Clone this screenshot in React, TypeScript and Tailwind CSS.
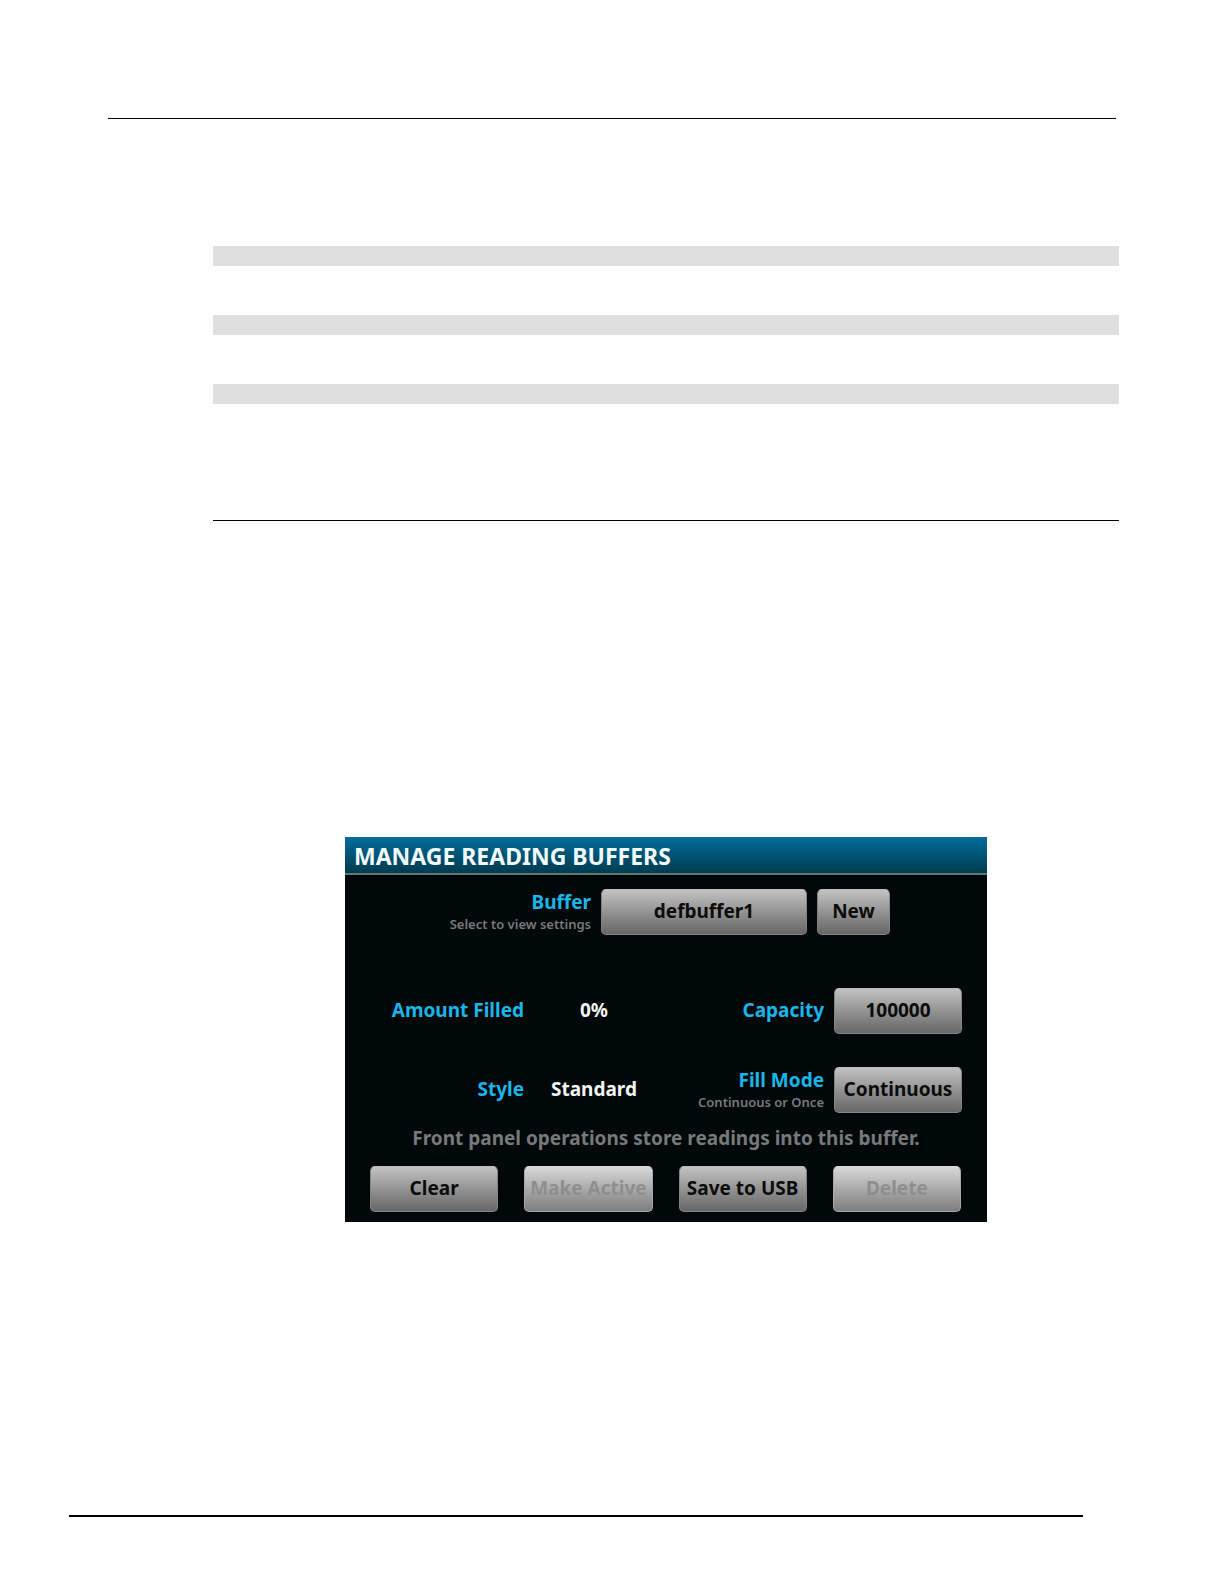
import React, { useState } from "react";

type PanelButtonProps = {
  id?: string;
  children: React.ReactNode;
  className?: string;
  disabled?: boolean;
  onClick?: () => void;
};

const PanelButton: React.FC<PanelButtonProps> = ({
  id,
  children,
  className = "",
  disabled = false,
  onClick,
}) => (
  <button
    id={id}
    type="button"
    disabled={disabled}
    onClick={onClick}
    className={`h-[46px] rounded-[5px] border border-[#858585] border-t-[#bcbcbc] bg-linear-to-b from-[#c2c2c2] to-[#676767] pb-0.5 text-[19px] font-bold whitespace-nowrap text-[#0c0c0c] disabled:border-[#a8a8a8] disabled:border-t-[#dadada] disabled:from-[#d8d8d8] disabled:to-[#7e7e7e] disabled:text-[#8e8e8e] ${className}`}
  >
    {children}
  </button>
);

type FieldLabelProps = {
  htmlFor: string;
  text: string;
  hint?: string;
};

const FieldLabel: React.FC<FieldLabelProps> = ({ htmlFor, text, hint }) => (
  <label
    htmlFor={htmlFor}
    className={hint ? "block pt-0.5 text-right" : "block pb-0.5 text-right"}
  >
    <span className="block text-[19px] leading-[22px] font-bold text-[#1bb6e9]">
      {text}
    </span>
    {hint && (
      <span className="block text-[13px] leading-[22px] font-semibold text-[#77797a]">
        {hint}
      </span>
    )}
  </label>
);

const ManageReadingBuffers: React.FC = () => {
  const [filled, setFilled] = useState(0);
  const [fillMode, setFillMode] = useState("Continuous");

  const toggleFillMode = () => {
    setFillMode(fillMode === "Continuous" ? "Once" : "Continuous");
  };

  return (
    <section className="mx-auto w-full max-w-[642px] bg-[#00080a] font-['Noto_Sans','Open_Sans',sans-serif]">
      <h1 className="border-b-2 border-[#64787c] bg-linear-to-b from-[#006d9b] to-[#013b50] pt-0.5 pl-[9px] text-[23px] leading-[34px] font-bold text-[#f2fafc]">
        MANAGE READING BUFFERS
      </h1>

      {/* buffer selection */}
      <div className="flex items-center justify-end gap-2.5 pt-3.5 pr-[97px]">
        <FieldLabel
          htmlFor="buffer"
          text="Buffer"
          hint="Select to view settings"
        />
        <PanelButton id="buffer" className="w-[206px]">
          defbuffer1
        </PanelButton>
        <PanelButton className="w-[73px]">New</PanelButton>
      </div>

      {/* settings of the selected buffer */}
      <div className="mt-[53px] grid grid-cols-[179px_140px_1fr_128px] items-center gap-y-[33px] pr-[25px]">
        <FieldLabel htmlFor="filled" text="Amount Filled" />
        <output
          id="filled"
          className="pb-0.5 text-center text-[19px] leading-[22px] font-bold text-[#f4f4f4]"
        >
          {filled}%
        </output>
        <div className="pr-2.5">
          <FieldLabel htmlFor="capacity" text="Capacity" />
        </div>
        <PanelButton id="capacity">100000</PanelButton>

        <FieldLabel htmlFor="style" text="Style" />
        <output
          id="style"
          className="pb-0.5 text-center text-[19px] leading-[22px] font-bold text-[#f4f4f4]"
        >
          Standard
        </output>
        <div className="pr-2.5">
          <FieldLabel
            htmlFor="fill-mode"
            text="Fill Mode"
            hint="Continuous or Once"
          />
        </div>
        <PanelButton id="fill-mode" onClick={toggleFillMode}>
          {fillMode}
        </PanelButton>
      </div>

      <p className="mt-[11px] text-center text-[19px] leading-7 font-bold text-[#77797a]">
        Front panel operations store readings into this buffer.
      </p>

      <div className="mt-3.5 grid grid-cols-4 gap-[26px] pr-[26px] pb-2.5 pl-[25px]">
        <PanelButton onClick={() => setFilled(0)}>Clear</PanelButton>
        <PanelButton disabled>Make Active</PanelButton>
        <PanelButton>Save to USB</PanelButton>
        <PanelButton disabled>Delete</PanelButton>
      </div>
    </section>
  );
};

const App: React.FC = () => {
  return (
    <div className="min-h-screen bg-white pt-[118px]">
      <hr className="mr-[108px] ml-[108px] border-t border-black" />

      <main className="mt-[127px] mr-[105px] ml-[213px]">
        <div className="space-y-[49px]">
          <div className="h-5 bg-[#dfdfdf]" />
          <div className="h-5 bg-[#dfdfdf]" />
          <div className="h-5 bg-[#dfdfdf]" />
        </div>
        <hr className="mt-[116px] mb-[316px] border-t border-black" />
        <ManageReadingBuffers />
      </main>

      <hr className="mt-[293px] mr-[141px] ml-[69px] border-t-2 border-black" />
    </div>
  );
};

export default App;
